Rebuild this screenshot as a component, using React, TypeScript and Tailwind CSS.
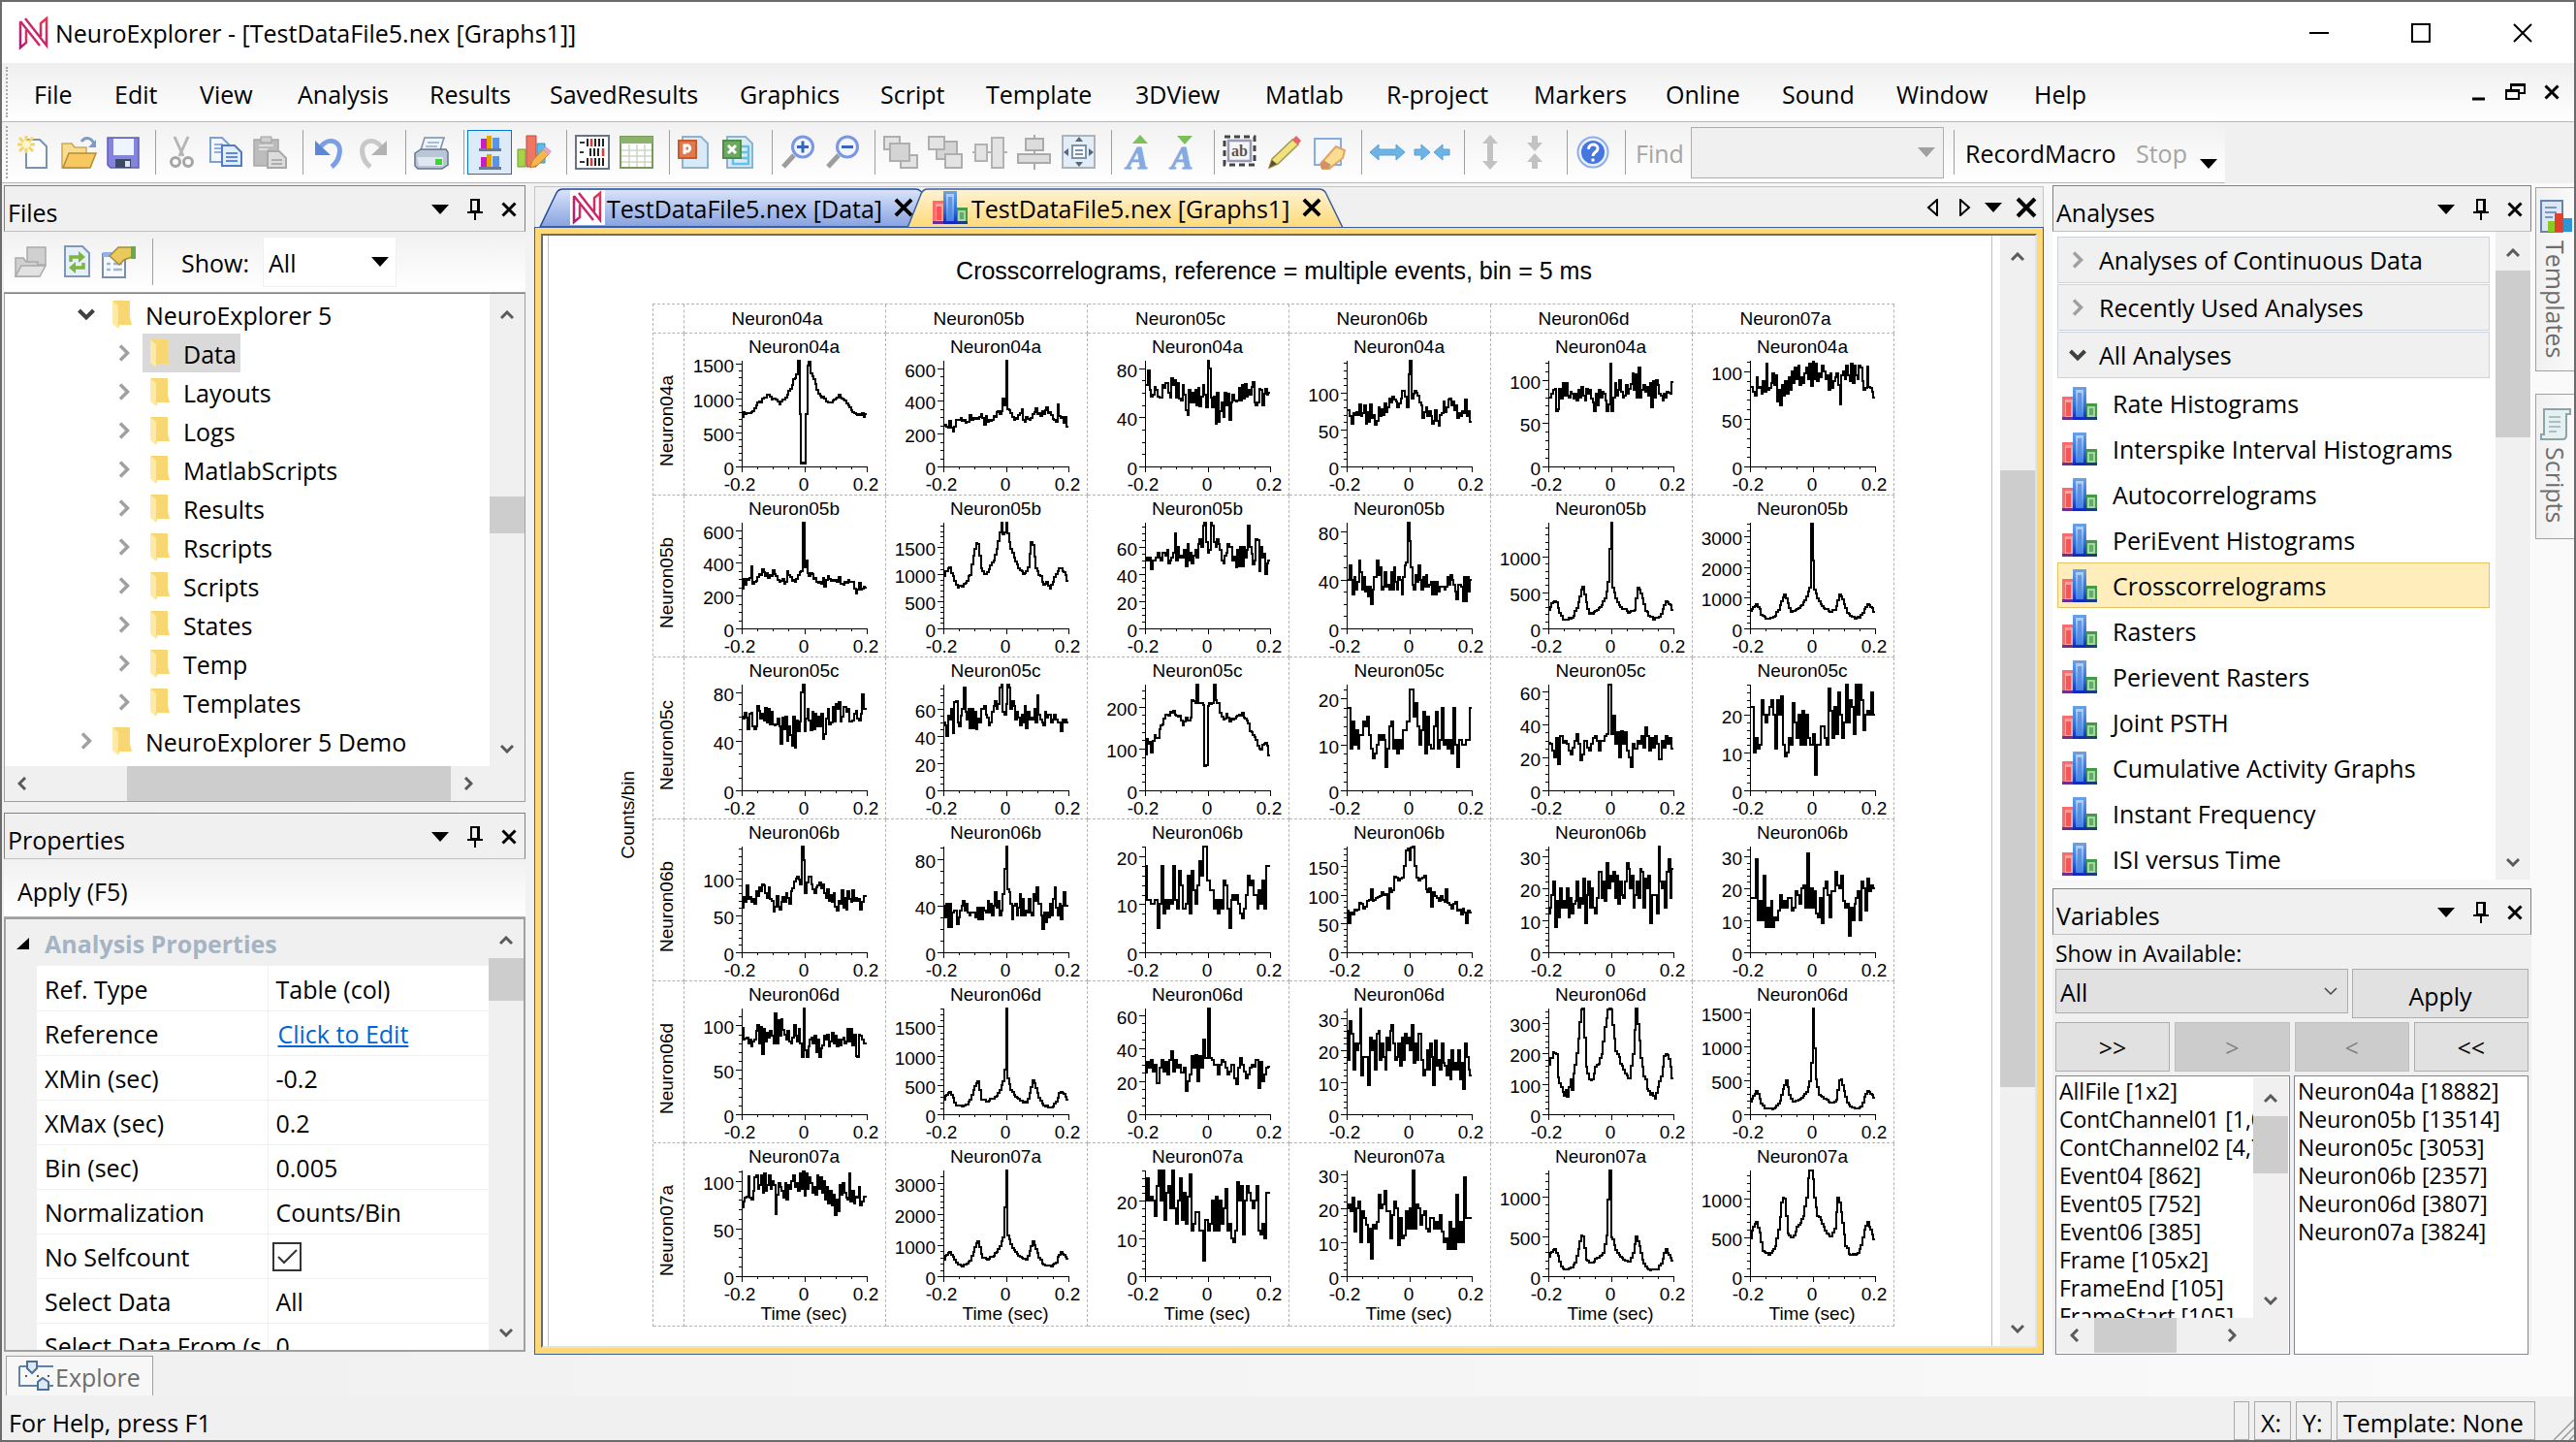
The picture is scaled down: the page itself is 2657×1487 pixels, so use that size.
import React from "react";

/* ---------------------------------------------------------------- data -- */

type Keys = [number, number][];

const NEURONS = ["Neuron04a", "Neuron05b", "Neuron05c", "Neuron06b", "Neuron06d", "Neuron07a"];

function smooth(keys: Keys, jitter = 0): number[] {
  const out: number[] = [];
  for (let i = 0; i < 80; i++) {
    let k = 0;
    while (k < keys.length - 2 && keys[k + 1][0] < i) k++;
    const [x0, y0] = keys[k];
    const [x1, y1] = keys[k + 1];
    const t = Math.min(1, Math.max(0, (i - x0) / (x1 - x0)));
    const wobble = Math.sin(i * 12.9898) * 43758.5453;
    out.push(y0 + (y1 - y0) * t + (wobble - Math.floor(wobble) - 0.5) * jitter);
  }
  return out;
}

const BASE: Record<string, number[]> = {
  "0,0": smooth([[0, 740], [1, 775], [6, 790], [9, 900], [12, 950], [14, 990], [17, 1050], [19, 990], [21, 990], [24, 930], [28, 1020], [31, 1130], [33, 1280], [35, 1340], [36, 1548], [37, 745], [38, 45], [40, 45], [41, 745], [42, 1480], [43, 1548], [44, 1350], [46, 1280], [48, 1130], [50, 1040], [53, 990], [55, 920], [58, 970], [62, 1040], [65, 990], [68, 900], [71, 800], [74, 770], [77, 770], [78, 740], [79, 780]], 40),
  "1,0": smooth([[0, 270], [2, 290], [5, 310], [6, 370], [7, 290], [10, 290], [12, 340], [17, 310], [20, 340], [23, 300], [28, 300], [29, 355], [30, 300], [36, 300], [38, 350], [39, 645], [40, 370], [41, 395], [42, 340], [44, 325], [48, 300], [52, 290], [53, 250], [54, 300], [60, 310], [66, 280], [68, 300], [71, 285], [73, 235], [75, 275], [77, 232], [78, 270], [79, 270]], 50),
  "2,0": [60, 58, 63, 59, 50, 62, 63, 52, 50, 52, 69, 65, 58, 62, 57, 67, 55, 66, 54, 64, 54, 53, 54, 58, 52, 38, 59, 50, 60, 40, 52, 45, 36, 60, 35, 57, 48, 56, 80, 86, 48, 58, 66, 57, 49, 64, 50, 62, 52, 60, 52, 62, 42, 46, 58, 66, 54, 55, 68, 56, 70, 66, 72, 56, 60, 68, 68, 64, 66, 56, 56, 57, 62, 65, 58, 57, 62, 78, 66, 66],
  "3,0": [60, 75, 68, 90, 72, 75, 68, 72, 65, 82, 76, 88, 82, 92, 90, 80, 74, 88, 72, 70, 55, 62, 76, 62, 58, 68, 75, 68, 80, 74, 65, 82, 86, 96, 100, 102, 98, 92, 143, 125, 80, 95, 102, 102, 92, 85, 80, 88, 90, 94, 86, 92, 80, 74, 85, 70, 78, 68, 80, 62, 56, 70, 66, 84, 60, 74, 58, 82, 72, 68, 84, 70, 74, 70, 72, 58, 68, 76, 76],
  "4,0": [97, 84, 85, 86, 80, 84, 76, 82, 84, 94, 100, 80, 98, 68, 96, 82, 92, 86, 94, 88, 80, 114, 80, 106, 88, 107, 95, 90, 84, 94, 82, 80, 86, 100, 88, 82, 96, 80, 64, 119, 72, 64, 76, 84, 86, 80, 88, 70, 84, 64, 74, 78, 88, 84, 90, 76, 82, 92, 80, 88, 76, 84, 78, 84, 86, 80, 82, 96, 82, 96, 78, 90, 66, 64, 90, 88, 84, 80, 80],
  "5,0": [72, 78, 82, 84, 105, 82, 80, 90, 104, 106, 92, 96, 106, 88, 108, 90, 96, 106, 92, 100, 96, 65, 86, 98, 94, 90, 82, 98, 80, 96, 92, 100, 106, 94, 98, 90, 108, 92, 110, 85, 108, 92, 104, 98, 88, 94, 86, 106, 92, 104, 88, 100, 80, 94, 76, 90, 74, 86, 64, 80, 68, 96, 86, 98, 88, 82, 80, 108, 78, 90, 76, 84, 82, 94, 74, 78, 84, 84],
  "1,1": smooth([[0, 1000], [2, 1080], [4, 1130], [5, 1020], [7, 900], [9, 750], [12, 790], [14, 820], [17, 1000], [19, 1350], [21, 1580], [22, 1560], [24, 1130], [26, 1000], [28, 1050], [30, 1150], [32, 1270], [34, 1480], [36, 1750], [37, 1958], [38, 1740], [39, 1760], [40, 1958], [41, 1740], [43, 1480], [45, 1300], [48, 1130], [52, 1000], [54, 1130], [56, 1600], [57, 1560], [59, 1130], [62, 950], [64, 820], [66, 860], [68, 750], [70, 870], [72, 1030], [74, 1130], [76, 1080], [78, 1000], [79, 900]], 50),
  "2,1": [50, 48, 40, 55, 52, 60, 42, 65, 66, 50, 47, 55, 60, 76, 58, 52, 60, 46, 60, 46, 58, 45, 53, 50, 60, 60, 62, 56, 54, 48, 50, 58, 62, 66, 60, 64, 76, 78, 58, 56, 64, 78, 76, 60, 66, 62, 52, 58, 54, 48, 56, 50, 62, 46, 58, 52, 54, 52, 60, 50, 70, 56, 52, 50, 48, 58, 54, 56, 56, 50, 52, 56, 52, 50, 50, 44, 52, 50, 52, 50],
  "3,1": [40, 30, 42, 22, 42, 22, 34, 36, 36, 24, 30, 36, 40, 44, 36, 42, 34, 32, 34, 34, 34, 30, 38, 28, 38, 28, 38, 36, 34, 44, 34, 42, 32, 40, 52, 38, 44, 32, 36, 50, 72, 91, 54, 52, 42, 28, 40, 42, 32, 38, 50, 32, 46, 32, 36, 34, 46, 34, 32, 50, 44, 56, 42, 42, 32, 20, 34, 26, 34, 30, 42, 32, 46, 56, 38, 32, 42, 28, 40, 52, 40, 40],
  "4,1": smooth([[0, 270], [2, 350], [4, 380], [6, 270], [8, 160], [10, 130], [13, 140], [15, 170], [17, 250], [19, 420], [21, 530], [22, 560], [23, 420], [24, 260], [28, 230], [32, 270], [34, 330], [36, 400], [38, 560], [39, 760], [40, 1806], [41, 600], [43, 420], [45, 320], [48, 270], [51, 210], [53, 200], [55, 350], [57, 590], [58, 540], [60, 370], [62, 230], [64, 160], [68, 120], [70, 130], [72, 220], [74, 370], [76, 380], [78, 310], [79, 270]], 30),
  "5,1": smooth([[0, 550], [2, 720], [4, 780], [6, 620], [9, 360], [11, 320], [14, 350], [17, 500], [19, 800], [21, 1050], [22, 1100], [24, 750], [25, 600], [28, 560], [31, 620], [34, 800], [36, 950], [38, 1250], [39, 2200], [40, 3395], [41, 1300], [42, 1200], [44, 900], [47, 720], [50, 600], [53, 540], [55, 800], [57, 1130], [59, 900], [61, 620], [63, 430], [66, 350], [69, 330], [72, 450], [73, 650], [75, 780], [77, 680], [79, 590]], 50),
  "2,2": smooth([[0, 90], [1, 118], [3, 115], [4, 92], [5, 120], [6, 130], [8, 128], [9, 145], [11, 155], [12, 175], [15, 180], [18, 190], [20, 175], [22, 178], [24, 160], [26, 175], [28, 170], [29, 175], [30, 212], [32, 212], [33, 253], [34, 212], [36, 205], [37, 200], [38, 58], [39, 58], [40, 200], [43, 212], [44, 253], [45, 212], [47, 208], [48, 190], [50, 172], [52, 180], [54, 165], [56, 170], [60, 185], [63, 180], [65, 172], [67, 145], [70, 130], [72, 110], [74, 100], [76, 115], [78, 110], [79, 88]], 10),
  "3,2": [18, 11, 11, 10, 10, 11, 11, 5, 10, 18, 8, 11, 9, 11, 10, 18, 11, 9, 17, 14, 9, 9, 10, 16, 8, 17, 13, 10, 14, 19, 16, 22, 22, 15, 15, 13, 13, 9, 11, 8, 11, 9, 15, 14, 9, 5, 11, 12, 11, 12, 10, 8, 7, 9, 12, 16, 14, 15, 12, 12, 9, 13, 10, 15, 9, 18, 18],
  "4,2": [25, 32, 28, 33, 26, 30, 19, 28, 33, 26, 32, 24, 33, 38, 26, 33, 28, 30, 25, 28, 14, 20, 24, 35, 28, 36, 20, 35, 28, 45, 34, 64, 34, 33, 30, 30, 24, 30, 33, 32, 28, 24, 26, 30, 22, 18, 28, 34, 30, 26, 22, 24, 28, 30, 29, 33, 16, 32, 20, 24, 28, 29],
  "5,2": [20, 26, 20, 21, 20, 16, 24, 28, 20, 28, 15, 22, 24, 18, 28, 18, 14, 20, 26, 15, 22, 14, 21, 27, 12, 14, 17, 17, 12, 12, 4, 15, 12, 14, 20, 12, 21, 12, 20, 14, 18, 23, 12, 14, 10, 9, 12, 25, 20, 24, 11, 20, 24, 22, 20, 18, 20, 24, 12, 11, 14, 10, 22, 22],
  "3,3": [72, 50, 70, 65, 74, 72, 74, 86, 84, 76, 80, 90, 92, 110, 90, 92, 95, 96, 98, 104, 100, 102, 76, 112, 104, 108, 132, 130, 125, 128, 130, 150, 178, 180, 160, 182, 184, 150, 130, 125, 128, 130, 134, 110, 104, 112, 80, 104, 98, 94, 90, 98, 92, 88, 110, 86, 82, 76, 84, 88, 72, 74, 66, 76, 70, 50, 72, 70],
  "4,3": [26, 17, 29, 25, 14, 22, 20, 22, 33, 12, 18, 18, 18, 9, 24, 20, 23, 14, 25, 26, 17, 22, 18, 14, 24, 20, 26, 28, 22, 17, 18, 22, 15, 24, 17, 25, 22, 24, 20, 28, 16, 22, 17, 25, 25, 17, 12, 14, 20, 14, 22, 18, 9, 23, 15, 17, 14, 22, 16, 15, 12, 17, 11, 20, 14, 16, 14, 20, 11, 16, 8, 22, 18, 14, 12],
  "5,3": [20, 21, 19, 23, 13, 20, 22, 10, 19, 17, 15, 10, 14, 5, 15, 14, 16, 24, 20, 21, 25, 19, 19, 11, 18, 22, 20, 9, 17, 11, 12, 19, 14, 20, 14, 31, 14, 21, 20, 15, 18, 19, 14, 13, 17, 17, 14, 16, 14, 18, 13, 10, 11, 8, 16, 8, 14, 8, 24, 10, 16, 10, 29, 17, 17, 17],
  "4,4": smooth([[0, 170], [2, 190], [3, 203], [5, 200], [6, 120], [8, 90], [10, 55], [11, 75], [12, 60], [14, 110], [15, 80], [16, 130], [18, 200], [20, 300], [21, 345], [22, 345], [24, 160], [26, 115], [28, 120], [30, 150], [32, 170], [34, 200], [36, 280], [38, 345], [39, 348], [40, 345], [41, 290], [43, 210], [46, 170], [49, 140], [52, 115], [54, 200], [56, 348], [57, 300], [59, 190], [61, 130], [63, 90], [65, 70], [67, 65], [68, 52], [70, 90], [72, 130], [74, 195], [76, 200], [78, 160], [79, 125]], 12),
  "5,4": smooth([[0, 260], [2, 310], [4, 340], [6, 250], [8, 120], [10, 80], [13, 90], [15, 110], [17, 170], [19, 350], [21, 510], [22, 500], [24, 220], [26, 170], [29, 190], [32, 240], [35, 290], [37, 500], [38, 970], [39, 1333], [40, 490], [41, 460], [43, 330], [45, 260], [48, 215], [52, 180], [54, 290], [56, 500], [58, 380], [60, 210], [62, 120], [65, 80], [68, 90], [70, 90], [72, 170], [74, 300], [75, 340], [77, 270], [79, 200]], 20),
  "5,5": smooth([[0, 500], [2, 650], [4, 700], [6, 560], [8, 330], [10, 290], [13, 290], [16, 380], [18, 600], [20, 950], [21, 1010], [22, 1000], [24, 560], [26, 500], [28, 540], [30, 620], [32, 700], [34, 790], [36, 1000], [37, 1250], [38, 1365], [39, 1360], [40, 1250], [41, 1000], [43, 790], [46, 680], [49, 560], [52, 500], [54, 620], [56, 1010], [57, 960], [59, 700], [61, 400], [63, 300], [66, 280], [69, 300], [71, 400], [73, 620], [75, 700], [77, 600], [79, 490]], 30),
};

/* Spikes that differ from the time-reversed histogram: bin -> value. */
const SPIKES: Record<string, Keys> = {
  "1,4": [[39, 1100], [40, 1466], [38, 640]],
  "4,5": [[38, 480], [39, 760], [40, 1561]],
};

/* Per cell: axis maximum, major step, minor step. */
const SCALE: [number, number, number][][] = [
  [[1548, 500, 100], [645, 200, 50], [86, 40, 10], [143, 50, 10], [122, 50, 10], [111, 50, 10]],
  [[645, 200, 50], [1958, 500, 100], [78, 20, 5], [87, 40, 10], [1466, 500, 100], [3437, 1000, 200]],
  [[86, 40, 10], [78, 20, 5], [253, 100, 20], [23, 10, 2], [64, 20, 5], [28, 10, 2]],
  [[143, 50, 10], [91, 40, 10], [22, 10, 2], [184, 50, 10], [33, 10, 2], [33, 10, 2]],
  [[119, 50, 10], [1806, 500, 100], [64, 20, 5], [33, 10, 2], [348, 100, 20], [1561, 500, 100]],
  [[111, 50, 10], [3395, 1000, 200], [28, 10, 2], [31, 10, 2], [1333, 500, 100], [1365, 500, 100]],
];

function valuesFor(row: number, col: number): number[] {
  const own = BASE[`${row},${col}`];
  const values = own ? own.slice() : BASE[`${col},${row}`].slice().reverse();
  for (const [bin, v] of SPIKES[`${row},${col}`] ?? []) values[bin] = v;
  return values;
}

/* -------------------------------------------------------------- charts -- */

const PX = 59;
const PW = 129;
const PY = 137;
const PH = 109;

function Correlogram({ row, col }: { row: number; col: number }) {
  const [max, major, minor] = SCALE[row][col];
  const values = valuesFor(row, col);
  const step = PW / values.length;
  const y = (v: number) => Math.round(PY - (Math.min(v, max) / max) * PH);
  const d = values
    .map((v, i) => `${i === 0 ? `M${PX} ` : "V"}${y(v)}H${Math.round(PX + (i + 1) * step)}`)
    .join("");
  const ticks: number[] = [];
  for (let v = 0; v <= max; v += minor) ticks.push(v);
  const last = row === 5;
  const h = last ? 188 : 166;
  return (
    <svg width="207" height={h} viewBox={`0 0 207 ${h}`} className="block" fontFamily="'Liberation Sans', Arial, sans-serif" fontSize="19" fill="#000">
      <text x="113" y="20" textAnchor="middle">{NEURONS[row]}</text>
      <g stroke="#000" strokeWidth="1" shapeRendering="crispEdges">
        <path d={`M${PX}.5 ${PY - PH}V${PY + 1}M${PX} ${PY}.5H${PX + PW + 1}`} />
        {ticks.map((v) => (
          <path key={v} d={`M${PX} ${y(v)}.5h${v % major === 0 ? -6 : -3}`} />
        ))}
        {[0, 1, 2, 3, 4, 5, 6, 7, 8].map((i) => (
          <path key={i} d={`M${Math.round(PX + (i * PW) / 8)}.5 ${PY}v${i % 4 === 0 ? 6 : 3}`} />
        ))}
      </g>
      <path d={d} fill="none" stroke="#000" strokeWidth="2" shapeRendering="crispEdges" />
      {ticks.filter((v) => v % major === 0).map((v) => (
        <text key={v} x="51" y={y(v) + 9} textAnchor="end">{v}</text>
      ))}
      <text x="57" y="162" textAnchor="middle">-0.2</text>
      <text x="123" y="162" textAnchor="middle">0</text>
      <text x="187" y="162" textAnchor="middle">0.2</text>
      {last && <text x="123" y="182" textAnchor="middle">Time (sec)</text>}
    </svg>
  );
}

const DASH = "border-r border-b border-dashed border-[#b4b4b4]";

function GraphPage() {
  return (
    <div className="flex min-w-0 flex-1 flex-col items-center overflow-hidden border-x border-[#c0c0c0] bg-white pt-[22px] font-['Liberation_Sans',Arial,sans-serif] text-[19px] leading-none text-black">
      <h1 className="pl-2 text-[25px] leading-[28px]">Crosscorrelograms, reference = multiple events, bin = 5 ms</h1>
      <div className="flex items-center gap-4 pt-5 pr-7">
        <div className="rotate-180 [writing-mode:vertical-rl]">Counts/bin</div>
        <div className="grid grid-cols-[32px_repeat(6,208px)] border-t border-l border-dashed border-[#b4b4b4]">
          <div className={DASH} />
          {NEURONS.map((n) => (
            <div key={n} className={`flex h-[30px] items-center justify-center pr-4 ${DASH}`}>{n}</div>
          ))}
          {NEURONS.map((n, r) => (
            <React.Fragment key={n}>
              <div className={`flex justify-center pt-[42px] pr-1 ${DASH}`}>
                <span className="h-[95px] rotate-180 [writing-mode:vertical-rl]">{n}</span>
              </div>
              {NEURONS.map((m, c) => (
                <div key={m} className={DASH}>
                  <Correlogram row={r} col={c} />
                </div>
              ))}
            </React.Fragment>
          ))}
        </div>
      </div>
    </div>
  );
}

/* --------------------------------------------------------------- icons -- */

function Ic({ children, size = 36 }: { children: React.ReactNode; size?: number }) {
  return (
    <svg width={size} height={size} viewBox="0 0 36 36" className="block shrink-0 overflow-visible" aria-hidden="true">
      {children}
    </svg>
  );
}

const Logo = () => (
  <Ic>
    <defs>
      <linearGradient id="lg" x1="0" y1="1" x2="1" y2="0"><stop offset="0" stopColor="#a81c7a" /><stop offset="1" stopColor="#ea3355" /></linearGradient>
    </defs>
    <g fill="none" stroke="url(#lg)" strokeWidth="2.5" strokeLinejoin="miter">
      <path d="M4 6V33L10 28V15" />
      <path d="M4 6L24 31" />
      <path d="M9 3L31 31V3L25 8V22" />
    </g>
  </Ic>
);

const Bars = () => (
  <svg width="36" height="34" viewBox="0 0 36 34" className="block shrink-0" aria-hidden="true">
    <defs>
      <linearGradient id="bb" x1="0" y1="0" x2="0" y2="1"><stop offset="0" stopColor="#6aa3ea" /><stop offset=".6" stopColor="#2a6fd8" /><stop offset="1" stopColor="#1022c0" /></linearGradient>
      <linearGradient id="bi" x1="0" y1="0" x2="0" y2="1"><stop offset="0" stopColor="#b4d0f5" /><stop offset="1" stopColor="#3f7fe0" /></linearGradient>
    </defs>
    <path d="M0 10H12V34H0Z" fill="#ff6a6a" />
    <path d="M3 13H11V31H3Z" fill="#ffa0a0" />
    <path d="M4 16H9V30H4Z" fill="#ff5252" />
    <path d="M0 31H12V34H0Z" fill="#70308a" />
    <path d="M24 17H36V34H24Z" fill="#459a45" />
    <path d="M26 20H34V31H26Z" fill="#a5d6a5" />
    <path d="M28 22H32V29H28Z" fill="#62ad66" />
    <path d="M24 31H36V34H24Z" fill="#1a3f78" />
    <path d="M11 0H25V34H11Z" fill="url(#bb)" />
    <path d="M14 3H22V31H14Z" fill="url(#bi)" />
    <path d="M16 6H20V28H16Z" fill="#4b86de" opacity=".7" />
  </svg>
);

const Folder = () => (
  <svg width="21" height="30" viewBox="0 0 21 30" className="block shrink-0" aria-hidden="true">
    <path d="M1 1H19V18L21 26H8V29L1 24Z" fill="#f8d672" />
    <path d="M1 1L7 6V30L1 25Z" fill="#ffe9a6" />
  </svg>
);

const page = (x: number, y: number, w: number, h: number, fill = "#eef4fc", stroke = "#7b93ad") => (
  <path d={`M${x} ${y}h${w - 7}l7 7v${h - 7}h-${w}z`} fill={fill} stroke={stroke} strokeWidth="2" />
);

const BIG_A = (
  <text x="18" y="35" textAnchor="middle" fontSize="34" fontWeight="bold" fontStyle="italic" fontFamily="'Liberation Serif', serif" fill="#86a9e2" stroke="#86a9e2" strokeWidth="1">A</text>
);

const ICONS: Record<string, React.ReactNode> = {
  New: (<>{page(10, 5, 21, 29, "#fbfdff")}<path d="M10 1v18M1 10h18M3 3l14 14M17 3L3 17" stroke="#f2d56b" strokeWidth="3" /><circle cx="10" cy="10" r="4" fill="#fff6c8" /></>),
  Open: (<><path d="M1 9h10l3 4h12v21H1z" fill="#f6dd92" stroke="#cfa94e" strokeWidth="1.5" /><path d="M8 19h28l-6 15H2z" fill="#f7c860" stroke="#b68a35" strokeWidth="1.5" /><path d="M21 7c4-6 11-4 13 3" fill="none" stroke="#7f9cbf" strokeWidth="3" /><path d="M36 5v8h-8z" fill="#7f9cbf" /></>),
  Save: (<><path d="M2 3h32v31H5l-3-3z" fill="#8484dc" stroke="#5e5eb8" strokeWidth="1.5" /><path d="M8 4h21v17H8z" fill="#eef5ff" /><path d="M10 25h16v9H10z" fill="#3d4a66" /><path d="M20 27h5v6h-5z" fill="#dfe5f2" /></>),
  Cut: (<><path d="M11 2l9 20M25 2l-9 20" stroke="#b5b5b5" strokeWidth="3" /><circle cx="12" cy="28" r="4.5" fill="none" stroke="#a5a5a5" strokeWidth="3" /><circle cx="25" cy="28" r="4.5" fill="none" stroke="#a5a5a5" strokeWidth="3" /></>),
  Copy: (<>{page(2, 3, 19, 25, "#f3f8ff", "#7d9fd3")}<path d="M6 10h9M6 14h11M6 18h11" stroke="#8fb0de" strokeWidth="2" />{page(14, 11, 20, 21, "#e2eeff", "#4f7cc9")}<path d="M18 19h12M18 23h12M18 27h12" stroke="#5b8ad6" strokeWidth="2" /></>),
  Paste: (<><path d="M1 5h25v27H1z" fill="#bcbcbc" stroke="#a8a8a8" strokeWidth="1.5" /><path d="M8 2h11v6H8z" fill="#cfcfcf" stroke="#9d9d9d" /><path d="M6 11h15M6 15h9" stroke="#dedede" strokeWidth="2" />{page(15, 17, 19, 17, "#dcdcdc", "#a8a8a8")}<path d="M19 26h11M19 30h11" stroke="#adadad" strokeWidth="2" /></>),
  Undo: (<><path d="M10 12C18 2 32 6 29 20c-1 6-4 10-8 13" fill="none" stroke="#7b9fe2" strokeWidth="5" /><path d="M4 6v15h16z" fill="#5b87d6" /></>),
  Redo: (<><path d="M26 12C18 2 4 6 7 20c1 6 4 10 8 13" fill="none" stroke="#c8c8c8" strokeWidth="5" /><path d="M32 6v15H16z" fill="#b2b2b2" /></>),
  Print: (<><path d="M11 3h20l-5 16H6z" fill="#eef5ff" stroke="#7c8ea6" strokeWidth="1.5" /><path d="M14 8h12M12 12h12" stroke="#a9bdd6" strokeWidth="2" /><path d="M1 19l6-4h26l2 3v13l-6 4H4l-3-3z" fill="#b9c6d6" stroke="#66768c" strokeWidth="1.5" /><path d="M3 23h27v9H5z" fill="#dfe7f0" /><path d="M22 25h7v6h-7z" fill="#39d62f" /></>),
  Graphs: (<><path d="M9 4h6v10H9z" fill="#c81ec8" /><path d="M15 1h5v13h-5z" fill="#e3a500" /><path d="M21 3h7v11h-7z" fill="#5b93ea" /><path d="M7 14h23v3H7z" fill="#6a7a92" /><path d="M9 23h6v10H9z" fill="#c81ec8" /><path d="M15 20h5v13h-5z" fill="#e3a500" /><path d="M21 22h7v11h-7z" fill="#5b93ea" /><path d="M7 33h23v3H7z" fill="#6a7a92" /></>),
  "Edit graph": (<><path d="M1 15h8v18H1z" fill="#a5d44a" stroke="#6e9e22" /><path d="M10 1h10v32H10z" fill="#ee7763" stroke="#c9463a" /><path d="M21 9h8v20h-8z" fill="#5dbbe8" stroke="#3194c9" /><path d="M14 34l2-7 11-12 6 5-11 11z" fill="#f6b64b" stroke="#c0852a" /><path d="M27 15l3-3 6 5-3 4z" fill="#dba6cc" /></>),
  Raster: (<><path d="M1 1h34v34H1z" fill="#fff" stroke="#66748a" strokeWidth="2" /><path d="M5 8h5M5 18h4M5 28h5" stroke="#333" strokeWidth="2" /><path d="M13 4v8M21 4v8M25 4v8M29 4v8M16 14v8M20 14v8M24 14v8M13 24v8M21 24v8M25 24v8M29 24v8" stroke="#222" strokeWidth="2" /><path d="M17 4v8M29 14v8M17 24v8" stroke="#e33" strokeWidth="2.5" /></>),
  Table: (<><path d="M1 2h33v32H1z" fill="#fff" stroke="#7a9a5a" strokeWidth="2" /><path d="M1 2h33v7H1z" fill="#8bb36a" /><path d="M10 10v23M18 10v23M26 10v23M2 16h31M2 22h31M2 28h31" stroke="#cdd5c8" strokeWidth="1.5" /></>),
  PowerPoint: (<>{page(5, 2, 26, 32, "#d8eaf7", "#8fb3cf")}<path d="M1 6h18v18H1z" fill="#e2794a" stroke="#c95a2b" strokeWidth="2" /><path d="M7 20V11h4a3.500 3.500 0 0 1 0 6H8" fill="none" stroke="#fff" strokeWidth="3" /></>),
  Excel: (<>{page(5, 2, 26, 32, "#d8eaf7", "#8fb3cf")}<path d="M20 12h7v18H11v-5M20 18h7M20 24h7" fill="none" stroke="#61c1e8" strokeWidth="2.5" /><path d="M1 6h18v18H1z" fill="#6ba860" stroke="#4f8c46" strokeWidth="2" /><path d="M6 11l8 8M14 11l-8 8" stroke="#fff" strokeWidth="3" /></>),
  "Zoom in": (<><circle cx="23" cy="12.500" r="10.500" fill="#f2f7ff" stroke="#7b97e0" strokeWidth="3" /><path d="M17 12.500h12M23 6.500v12" stroke="#3b64b8" strokeWidth="3" /><path d="M14 21L3 33" stroke="#9d9d9d" strokeWidth="5" /></>),
  "Zoom out": (<><circle cx="23" cy="12.500" r="10.500" fill="#f2f7ff" stroke="#7b97e0" strokeWidth="3" /><path d="M17 12.500h12" stroke="#3b64b8" strokeWidth="3" /><path d="M14 21L3 33" stroke="#9d9d9d" strokeWidth="5" /></>),
  "To front": (<g fill="#e3e3e3" stroke="#aeaeae" strokeWidth="2"><path d="M1 2h16v13H1zM18 21h17v13H18z" /><path d="M7 9h20v18H7z" fill="#d4d4d4" /></g>),
  "To back": (<g fill="#e3e3e3" stroke="#aeaeae" strokeWidth="2"><path d="M9 7h21v18H9z" fill="#d4d4d4" /><path d="M1 2h16v13H1zM18 20h17v14H18z" /></g>),
  "Align middle": (<g fill="#e3e3e3" stroke="#b2b2b2" strokeWidth="2"><path d="M0 18h36" /><path d="M3 10h12v17H3zM20 3h12v31H20z" /></g>),
  "Align center": (<g fill="#dcdcdc" stroke="#aaaaaa" strokeWidth="2"><path d="M18 0v36" /><path d="M9 4h18v12H9zM1 20h33v9H1z" /></g>),
  "Fit page": (<><path d="M1 1h33v33H1z" fill="#e2edf8" stroke="#a9b4bf" strokeWidth="2" /><path d="M11 11h14v13H11z" fill="#fff" stroke="#7c93ad" strokeWidth="2" /><path d="M18 2l4 5h-8zM18 33l4-5h-8zM2 18l5-4v8zM33 18l-5-4v8z" fill="#54677e" /><path d="M14 16h8M14 20h8" stroke="#7c93ad" strokeWidth="2" /></>),
  "Font up": (<>{BIG_A}<path d="M21 0l8 9H13z" fill="#7cc05c" /></>),
  "Font down": (<>{BIG_A}<path d="M13 1h16l-8 9z" fill="#7cc05c" /></>),
  "Text box": (<><path d="M2 2h31v29H2z" fill="none" stroke="#444" strokeWidth="3" strokeDasharray="6 4" /><path d="M6 6h23v21H6z" fill="#f5f5f8" stroke="#9a9ab4" strokeWidth="2.5" /><text x="17.500" y="22" textAnchor="middle" fontSize="16" fontWeight="bold" fontFamily="'Liberation Serif', serif" fill="#555">ab</text></>),
  Pencil: (<><path d="M2 34l3-9L26 5l6 5L11 30z" fill="#f0e27c" stroke="#a99a45" strokeWidth="1.500" /><path d="M26 5l4-4 5 5-3 4z" fill="#e5656b" /><path d="M2 34l3-8 5 4z" fill="#5b5137" /></>),
  Note: (<><path d="M3 4h27v27H3z" fill="#f5f9ff" stroke="#86ade0" strokeWidth="2" /><path d="M9 30L25 12l9 4-2 8-14 11h-7z" fill="#fbdc92" stroke="#e0a566" strokeWidth="2" /><path d="M9 30l3-4 8 5-3 4h-7z" fill="#cf9466" /></>),
  Widen: (<path d="M0 18l9-8v5h18v-5l9 8-9 8v-5H9v5z" fill="#6cb4e6" stroke="#5b9ed2" strokeWidth="1" />),
  Narrow: (<path d="M0 15h7v-5l9 8-9 8v-5H0zM36 15h-7v-5l-9 8 9 8v-5h7z" fill="#6cb4e6" stroke="#5b9ed2" strokeWidth="1" />),
  Heighten: (<path d="M18 0l8 9h-5v18h5l-8 9-8-9h5V9h-5z" fill="#c2c2c2" />),
  Shorten: (<path d="M15 1h6v7h5l-8 9-8-9h5zM15 35h6v-7h5l-8-9-8 9h5z" fill="#c2c2c2" />),
  Help: (<><circle cx="18" cy="18" r="15.500" fill="#eaf1ff" stroke="#8facec" strokeWidth="2" /><circle cx="18" cy="18" r="12" fill="#4676e0" /><path d="M13.500 15c0-7 9.500-6 9.500-1 0 4-5 3.500-5 8M18 24.500v3" fill="none" stroke="#fff" strokeWidth="3" /></>),
};

const TOOL_GROUPS: string[][] = [
  ["New", "Open", "Save"],
  ["Cut", "Copy", "Paste"],
  ["Undo", "Redo"],
  ["Print"],
  ["Graphs", "Edit graph"],
  ["Raster", "Table"],
  ["PowerPoint", "Excel"],
  ["Zoom in", "Zoom out"],
  ["To front", "To back", "Align middle", "Align center", "Fit page"],
  ["Font up", "Font down"],
  ["Text box", "Pencil", "Note"],
  ["Widen", "Narrow"],
  ["Heighten", "Shorten"],
  ["Help"],
];

const Sep = () => <div className="mr-[3px] ml-[10px] h-[46px] w-px bg-[#9f9f9f]" />;

const Grip = () => <div className="my-1 ml-1 w-0 self-stretch border-l-2 border-dotted border-[#a8a8a8]" />;

const Triangle = ({ fill = "#000" }: { fill?: string }) => (
  <svg width="18" height="10" viewBox="0 0 18 10" className="block shrink-0" aria-hidden="true"><path d="M0 0H18L9 10Z" fill={fill} /></svg>
);

const Cross = ({ size = 16, width = 3 }: { size?: number; width?: number }) => (
  <svg width={size} height={size} viewBox="0 0 16 16" className="block shrink-0" aria-hidden="true">
    <path d="M1.500 1.500L14.500 14.500M14.500 1.500L1.500 14.500" stroke="#000" strokeWidth={width} />
  </svg>
);

const Pin = () => (
  <svg width="16" height="24" viewBox="0 0 16 24" className="block shrink-0" aria-hidden="true">
    <path d="M4 2H12V14H4ZM0 15H16M8 15V23" fill="none" stroke="#000" strokeWidth="2" /><path d="M10 2h3v12h-3z" />
  </svg>
);

const ROT = { up: "", down: "rotate-180", left: "-rotate-90", right: "rotate-90" };

function Arrow({ dir }: { dir: keyof typeof ROT }) {
  return (
    <button type="button" aria-label={`Scroll ${dir}`} className="flex size-9 shrink-0 items-center justify-center">
      <svg width="14" height="10" viewBox="0 0 14 10" className={ROT[dir]} aria-hidden="true">
        <path d="M1 8L7 2L13 8" fill="none" stroke="#5a5a5a" strokeWidth="3" />
      </svg>
    </button>
  );
}

const VBar = ({ thumb }: { thumb: string }) => (
  <div className="flex w-9 shrink-0 flex-col bg-[#f0f0f0] pt-1">
    <Arrow dir="up" />
    <div className="min-h-0 flex-1"><div className={`bg-[#cdcdcd] ${thumb}`} /></div>
    <Arrow dir="down" />
  </div>
);

const Chevron = ({ open }: { open?: boolean }) => (
  <svg width="18" height="18" viewBox="0 0 18 18" className="block shrink-0" aria-hidden="true">
    {open ? <path d="M1.500 5L9 12.500L16.500 5" fill="none" stroke="#404040" strokeWidth="4" /> : <path d="M5 1.500L12.500 9L5 16.500" fill="none" stroke="#a0a0a0" strokeWidth="3.500" />}
  </svg>
);

/* -------------------------------------------------------------- panels -- */

function PanelHeader({ title }: { title: string }) {
  return (
    <div className="flex h-12 shrink-0 items-center border border-[#808080] border-b-[#c0c0c0] bg-[#f0f0f0] pr-2 pl-[3px]">
      <h2 className="flex-1 pt-[7px]">{title}</h2>
      <div className="flex items-center gap-[19px] pt-[2px]">
        <button type="button" aria-label={`${title} menu`}><Triangle /></button>
        <button type="button" aria-label={`Pin ${title}`}><Pin /></button>
        <button type="button" aria-label={`Close ${title}`}><Cross /></button>
      </div>
    </div>
  );
}

const TREE = ["Data", "Layouts", "Logs", "MatlabScripts", "Results", "Rscripts", "Scripts", "States", "Temp", "Templates"];

function TreeRow({ label, root, open, selected }: { label: string; root?: boolean; open?: boolean; selected?: boolean }) {
  return (
    <li className={`flex h-10 items-center ${root ? "pl-[71px]" : "pl-[110px]"}`}>
      <button type="button" aria-label={`Toggle ${label}`} className="w-[32px] pl-1"><Chevron open={open} /></button>
      <button type="button" className={`flex h-10 items-center gap-[14px] pr-1 pl-[7px] ${selected ? "bg-[#d9d9d9]" : ""}`}>
        <Folder />
        <span className="pt-px">{label}</span>
      </button>
    </li>
  );
}

function FilesPanel() {
  return (
    <section className="flex h-[636px] shrink-0 flex-col">
      <PanelHeader title="Files" />
      <div className="flex h-[63px] shrink-0 items-center border-b border-[#a8a8a8] bg-linear-to-b from-[#f1f1f1] to-white pl-2">
        <button type="button" aria-label="Up one level" className="w-[46px] pl-[3px]">
          <Ic><g fill="#d0d0d0" stroke="#a9a9a9" strokeWidth="1.500"><path d="M13 3h19v18H13z" /><path d="M1 14h8l3 4h12v15H1z" /><path d="M7 22h25l-6 11H1z" fill="#e2e2e2" /></g></Ic>
        </button>
        <button type="button" aria-label="Refresh" className="w-[46px] pl-1">
          <Ic>{page(5, 2, 25, 31, "#e6f0fb", "#7f98b5")}<path d="M11 18v-5h9M24 19v5h-9" fill="none" stroke="#7db63c" strokeWidth="3.500" /><path d="M19 7l7 6-7 6zM16 18l-7 6 7 6z" fill="#7db63c" /></Ic>
        </button>
        <button type="button" aria-label="Properties" className="w-[46px]">
          <Ic><path d="M2 10h23v24H2z" fill="#f6f9ff" stroke="#7c8fa8" strokeWidth="2" /><path d="M2 8h23v5H2z" fill="#8fb2ea" /><path d="M6 20h4M13 20h9M6 26h4M13 26h9" stroke="#9db4d8" strokeWidth="2.500" /><path d="M9 12L18 3h14v10l-8 3-5 5z" fill="#e8c95c" stroke="#a58a3a" strokeWidth="1.500" /><path d="M31 2h5v13h-5z" fill="#6aa84f" /></Ic>
        </button>
        <div className="mr-[11px] ml-[7px] h-12 w-px bg-[#9f9f9f]" />
        <label htmlFor="show" className="ml-[18px] pt-[2px]">Show:</label>
        <div className="relative ml-[14px] flex h-[52px] w-[138px] items-center">
          <select id="show" defaultValue="All" className="h-full w-full appearance-none border border-[#f0f0f0] bg-white px-[5px] pt-[2px]">
            <option>All</option>
          </select>
          <span className="pointer-events-none absolute right-2"><Triangle /></span>
        </div>
      </div>
      <div className="flex min-h-0 flex-1 flex-col border border-[#a0a0a0] border-t-[#808080] bg-white">
        <div className="flex min-h-0 flex-1">
          <ul className="min-w-0 flex-1 overflow-hidden pt-px">
            <TreeRow label="NeuroExplorer 5" root open />
            {TREE.map((t) => <TreeRow key={t} label={t} selected={t === "Data"} />)}
            <TreeRow label="NeuroExplorer 5 Demo" root />
          </ul>
          <VBar thumb="mt-[169px] h-[38px]" />
        </div>
        <div className="flex h-9 shrink-0 bg-[#f0f0f0] pr-10">
          <Arrow dir="left" />
          <div className="flex-1 pl-[90px]"><div className="h-9 w-[334px] bg-[#cdcdcd]" /></div>
          <Arrow dir="right" />
        </div>
      </div>
    </section>
  );
}

const PROPS: [string, React.ReactNode][] = [
  ["Ref. Type", "Table (col)"],
  ["Reference", <a href="#reference" className="pl-[2px] text-[#0066d6] underline">Click to Edit</a>],
  ["XMin (sec)", "-0.2"],
  ["XMax (sec)", "0.2"],
  ["Bin (sec)", "0.005"],
  ["Normalization", "Counts/Bin"],
  ["No Selfcount", "check"],
  ["Select Data", "All"],
  ["Select Data From (s", "0"],
];

function PropertiesPanel() {
  return (
    <section className="mt-[11px] flex min-h-0 flex-1 flex-col">
      <PanelHeader title="Properties" />
      <div className="flex h-[60px] shrink-0 items-center border-b border-[#b0b0b0] bg-linear-to-b from-[#f1f1f1] to-white pl-[14px]">
        <button type="button" className="pt-[6px]">Apply (F5)</button>
      </div>
      <div className="flex min-h-0 flex-1 border-2 border-[#a0a0a0] bg-white">
        <div className="min-w-0 flex-1 overflow-hidden">
          <button type="button" className="flex h-12 w-full items-center gap-4 bg-[#f0f0f0] pt-px pl-[11px] font-bold text-[#a5b4c5]">
            <svg width="13" height="12" viewBox="0 0 13 12" aria-hidden="true"><path d="M13 0V12H0Z" fill="#000" /></svg>
            Analysis Properties
          </button>
          <table className="w-full table-fixed border-collapse">
            <tbody>
              {PROPS.map(([name, value]) => (
                <tr key={name} className="h-[46px]">
                  <td className="w-8 bg-[#f0f0f0]" />
                  <th scope="row" className="w-[238px] overflow-hidden border-r border-b border-[#f0f0f0] pt-[2px] pl-2 text-left font-normal whitespace-nowrap">
                    {value === "check" ? <label htmlFor="selfcount">{name}</label> : name}
                  </th>
                  <td className="border-b border-[#f0f0f0] pt-[2px] pl-2">
                    {value === "check" ? (
                      <span className="relative -ml-1 block size-[30px]">
                        <input id="selfcount" type="checkbox" defaultChecked className="block size-full appearance-none border-2 border-[#333] bg-white" />
                        <svg viewBox="0 0 30 30" className="pointer-events-none absolute inset-0" aria-hidden="true"><path d="M6 15L12 21L25 8" fill="none" stroke="#333" strokeWidth="2" /></svg>
                      </span>
                    ) : value}
                  </td>
                </tr>
              ))}
            </tbody>
          </table>
        </div>
        <VBar thumb="h-[44px]" />
      </div>
    </section>
  );
}

const ANALYSES = ["Rate Histograms", "Interspike Interval Histograms", "Autocorrelograms", "PeriEvent Histograms", "Crosscorrelograms", "Rasters", "Perievent Rasters", "Joint PSTH", "Cumulative Activity Graphs", "Instant Frequency", "ISI versus Time"];
const CATEGORIES = ["Analyses of Continuous Data", "Recently Used Analyses", "All Analyses"];

function AnalysesPanel() {
  return (
    <section className="flex h-[716px] shrink-0 flex-col">
      <PanelHeader title="Analyses" />
      <div className="flex min-h-0 flex-1 bg-white pl-[5px]">
        <div className="min-w-0 flex-1 overflow-hidden pt-[5px] pr-[6px]">
          <div className="flex flex-col gap-px">
            {CATEGORIES.map((c, i) => (
              <button key={c} type="button" className="flex h-12 items-center gap-[13px] border border-[#ccd2de] bg-[#f0f0f0] pl-[11px]">
                <Chevron open={i === 2} />
                <span>{c}</span>
              </button>
            ))}
          </div>
          <div className="flex flex-col pt-[2px]">
            {ANALYSES.map((a) => (
              <button key={a} type="button" className={`flex h-[47px] shrink-0 items-center gap-4 border pl-1 ${a === "Crosscorrelograms" ? "border-[#e5c365] bg-[#ffeebb]" : "border-transparent"}`}>
                <Bars />
                <span className="pt-px">{a}</span>
              </button>
            ))}
          </div>
        </div>
        <VBar thumb="h-[172px]" />
        <div className="w-px" />
      </div>
    </section>
  );
}

const AVAILABLE = ["AllFile [1x2]", "ContChannel01 [1,0", "ContChannel02 [4,7", "Event04 [862]", "Event05 [752]", "Event06 [385]", "Frame [105x2]", "FrameEnd [105]", "FrameStart [105]"];
const CHOSEN = ["Neuron04a [18882]", "Neuron05b [13514]", "Neuron05c [3053]", "Neuron06b [2357]", "Neuron06d [3807]", "Neuron07a [3824]"];

const BTN = "border border-[#adadad] bg-[#e1e1e1]";
const BTN_OFF = "border border-[#bfbfbf] bg-[#cccccc] text-[#838383]";

function VariablesPanel() {
  return (
    <section className="mt-[9px] flex min-h-0 flex-1 flex-col bg-[#f0f0f0]">
      <PanelHeader title="Variables" />
      <div className="flex min-h-0 flex-1 flex-col px-[3px]">
        <label htmlFor="available" className="h-[35px] pt-1 text-[23px] leading-[30px]">Show in Available:</label>
        <div className="flex gap-1">
          <div className="relative flex h-[46px] flex-1 items-center">
            <select id="available" defaultValue="All" className={`h-full w-full appearance-none px-1 pt-[2px] ${BTN}`}>
              <option>All</option>
            </select>
            <svg width="14" height="9" viewBox="0 0 14 9" className="pointer-events-none absolute right-[11px]" aria-hidden="true"><path d="M1 1L7 7L13 1" fill="none" stroke="#444" strokeWidth="1.500" /></svg>
          </div>
          <button type="button" className={`h-[51px] w-[182px] pt-1 ${BTN}`}>Apply</button>
        </div>
        <div className="mt-1 grid h-[51px] grid-cols-4 gap-[5px]">
          <button type="button" className={`pt-px ${BTN}`}>&gt;&gt;</button>
          <button type="button" disabled className={`pt-px ${BTN_OFF}`}>&gt;</button>
          <button type="button" disabled className={`pt-px ${BTN_OFF}`}>&lt;</button>
          <button type="button" className={`pt-px ${BTN}`}>&lt;&lt;</button>
        </div>
        <div className="mt-1 grid min-h-0 flex-1 grid-cols-2 gap-1 text-[23px] leading-[29px]">
          <div className="flex min-h-0 flex-col border border-[#828790] bg-white p-px">
            <div className="flex min-h-0 flex-1">
              <ul className="min-w-0 flex-1 overflow-hidden pl-[2px] whitespace-nowrap">
                {AVAILABLE.map((v) => <li key={v}>{v}</li>)}
              </ul>
              <VBar thumb="h-[59px]" />
            </div>
            <div className="flex h-9 shrink-0 bg-[#f0f0f0] pr-10">
              <Arrow dir="left" />
              <div className="flex-1 pl-[2px]"><div className="h-9 w-[85px] bg-[#cdcdcd]" /></div>
              <Arrow dir="right" />
            </div>
          </div>
          <ul className="overflow-hidden border border-[#828790] bg-white py-px pl-[3px] whitespace-nowrap">
            {CHOSEN.map((v) => <li key={v}>{v}</li>)}
          </ul>
        </div>
      </div>
    </section>
  );
}

/* ---------------------------------------------------------------- tabs -- */

function Documents() {
  return (
    <main className="mx-[9px] mt-[3px] mb-[43px] flex min-w-0 flex-1 flex-col">
      <div className="flex h-[42px] shrink-0 items-end border border-b-0 border-[#c4c4c4] bg-[#f0f0f0] pl-1">
        <div className="relative flex h-10 w-[400px] items-center pl-8">
          <svg className="absolute inset-0 h-full w-full" viewBox="0 0 402 40" preserveAspectRatio="none" aria-hidden="true">
            <defs><linearGradient id="tb" x1="0" y1="0" x2="0" y2="1"><stop offset="0" stopColor="#dbe5fa" /><stop offset="1" stopColor="#86a2e0" /></linearGradient></defs>
            <path d="M1 40L18 5Q20 1 25 1H390Q397 1 399 10L402 40Z" fill="url(#tb)" stroke="#1f4a9c" strokeWidth="1.500" />
          </svg>
          <button type="button" className="relative flex items-center gap-[2px]">
            <span className="bg-white"><Logo /></span>
            <span className="pt-[2px]">TestDataFile5.nex [Data]</span>
          </button>
          <button type="button" aria-label="Close Data" className="relative ml-3"><Cross size={20} width={3} /></button>
        </div>
        <div className="relative -ml-5 flex h-10 w-[450px] items-center pl-[26px]">
          <svg className="absolute inset-0 h-full w-full" viewBox="0 0 450 40" preserveAspectRatio="none" aria-hidden="true">
            <defs><linearGradient id="ty" x1="0" y1="0" x2="0" y2="1"><stop offset="0" stopColor="#fff3d6" /><stop offset="1" stopColor="#ffd976" /></linearGradient></defs>
            <path d="M0 41L14 6Q16 1 21 1H424Q430 1 432 6L449 41" fill="url(#ty)" stroke="#3b5f9e" strokeWidth="1.500" />
          </svg>
          <button type="button" className="relative flex items-center gap-1">
            <Bars />
            <span className="pt-[2px]">TestDataFile5.nex [Graphs1]</span>
          </button>
          <button type="button" aria-label="Close Graphs1" className="relative ml-[13px]"><Cross size={20} width={3} /></button>
        </div>
        <div className="flex h-10 flex-1 items-center justify-end gap-[14px] pr-[6px]">
          <button type="button" aria-label="Previous tab"><svg width="12" height="18" viewBox="0 0 12 18"><path d="M11 1V17L2 9Z" fill="none" stroke="#000" strokeWidth="2" /></svg></button>
          <button type="button" aria-label="Next tab" className="ml-2"><svg width="12" height="18" viewBox="0 0 12 18"><path d="M1 1V17L10 9Z" fill="none" stroke="#000" strokeWidth="2" /></svg></button>
          <button type="button" aria-label="Tab list"><Triangle /></button>
          <button type="button" aria-label="Close tab"><Cross size={22} width={3} /></button>
        </div>
      </div>
      <div className="flex min-h-0 flex-1 border border-[#3b5f9e] bg-[#ffd976] p-[6px]">
        <div className="flex min-w-0 flex-1 border-2 border-[#6b6b6b] border-r-[#e3e3e3] border-b-[#e3e3e3] bg-white pl-[5px]">
          <GraphPage />
          <div className="w-2" />
          <VBar thumb="mt-[202px] h-[636px]" />
        </div>
      </div>
    </main>
  );
}

const MENU: [string, string][] = [
  ["File", "w-[83px]"], ["Edit", "w-[88px]"], ["View", "w-[101px]"], ["Analysis", "w-[136px]"], ["Results", "w-[124px]"],
  ["SavedResults", "w-[196px]"], ["Graphics", "w-[145px]"], ["Script", "w-[109px]"], ["Template", "w-[154px]"], ["3DView", "w-[134px]"],
  ["Matlab", "w-[125px]"], ["R-project", "w-[152px]"], ["Markers", "w-[136px]"], ["Online", "w-[120px]"], ["Sound", "w-[118px]"],
  ["Window", "w-[142px]"], ["Help", "w-[96px]"],
];

const SIDE = "flex flex-col items-center border border-r-0 border-[#a0a0a0] bg-linear-to-r from-[#f0f0f0] to-[#fafafa] text-[#6d6d6d]";

export default function App() {
  return (
    <div className="flex h-screen flex-col overflow-hidden border-2 border-[#6b6b6b] bg-[#f0f0f0] font-['Open_Sans','Noto_Sans',sans-serif] text-[25px] leading-[34px] text-black">
      <header className="flex h-[63px] shrink-0 items-center bg-white pl-[15px]">
        <Logo />
        <div className="flex-1 pl-1">NeuroExplorer - [TestDataFile5.nex [Graphs1]]</div>
        <button type="button" aria-label="Minimize" className="flex w-[105px] justify-center"><svg width="20" height="20" viewBox="0 0 20 20"><path d="M0 10H20" stroke="#000" strokeWidth="2" /></svg></button>
        <button type="button" aria-label="Maximize" className="flex w-[105px] justify-center"><svg width="20" height="20" viewBox="0 0 20 20"><path d="M1 1H19V19H1Z" fill="none" stroke="#000" strokeWidth="2" /></svg></button>
        <button type="button" aria-label="Close window" className="flex w-[106px] justify-center"><svg width="20" height="20" viewBox="0 0 20 20"><path d="M1 1L19 19M19 1L1 19" stroke="#000" strokeWidth="2" /></svg></button>
      </header>

      <nav className="flex h-[61px] shrink-0 items-center border-b border-[#b8b8b8] bg-linear-to-b from-[#efefef] to-white">
        <Grip />
        <div className="flex flex-1 pl-[7px]">
          {MENU.map(([m, w]) => (
            <button key={m} type="button" className={`shrink-0 pt-1 pl-5 text-left whitespace-nowrap ${w}`}>{m}</button>
          ))}
        </div>
        <div className="flex items-center gap-[19px] pr-[15px]">
          <button type="button" aria-label="Minimize document"><svg width="13" height="20" viewBox="0 0 13 20"><path d="M0 17H13" stroke="#000" strokeWidth="3" /></svg></button>
          <button type="button" aria-label="Restore document" className="ml-[2px]"><svg width="21" height="18" viewBox="0 0 21 18"><path d="M6 6V1H20V10H15M1 7H14V16H1ZM1 8H14M6 2H20" fill="none" stroke="#000" strokeWidth="2" /></svg></button>
          <button type="button" aria-label="Close document"><Cross size={16} width={3} /></button>
        </div>
      </nav>

      <div className="flex h-[63px] shrink-0">
        <div className="flex items-center border-b border-[#b8b8b8] bg-linear-to-b from-[#f1f1f1] to-white">
          <Grip />
          <div className="w-1" />
          {TOOL_GROUPS.map((g) => (
            <React.Fragment key={g[0]}>
              {g.map((t) => (
                <button key={t} type="button" title={t} className={`flex size-[46px] shrink-0 items-center justify-center ${t === "Graphs" ? "border border-[#0078d7] bg-[#dcebf7]" : ""}`}>
                  <Ic>{ICONS[t]}</Ic>
                </button>
              ))}
              <Sep />
            </React.Fragment>
          ))}
          <label htmlFor="find" className="ml-[7px] w-[57px] pt-[2px] text-[#a5a5a5]">Find</label>
          <div className="relative flex h-[53px] w-[261px] items-center">
            <select id="find" disabled className="h-full w-full appearance-none border border-[#adadad] bg-[#f0f0f0] opacity-100" />
            <span className="pointer-events-none absolute right-[9px]"><Triangle fill="#a0a0a0" /></span>
          </div>
          <Sep />
          <button type="button" className="ml-[8px] w-[176px] pt-[2px] text-left">RecordMacro</button>
          <button type="button" disabled className="w-[66px] pt-[2px] text-left text-[#a5a5a5]">Stop</button>
          <button type="button" aria-label="Toolbar options" className="mt-6 mr-2"><Triangle /></button>
        </div>
      </div>

      <div className="flex min-h-0 flex-1 bg-linear-to-r from-[#f0f0f0] to-[#fafafa]">
        <aside className="flex w-[540px] shrink-0 flex-col pt-[2px] pl-[2px]">
          <FilesPanel />
          <PropertiesPanel />
          <div className="flex h-[46px] shrink-0 items-start pt-1 pl-[2px]">
            <button type="button" className="flex h-[41px] items-center gap-[2px] border border-b-0 border-[#a0a0a0] bg-[#f7f7f7] pr-3 pl-3 text-[#6d6d6d]">
              <Ic><path d="M1 8H8M20 8H36M1 8V28H20M31 28H36" fill="none" stroke="#5f84a8" strokeWidth="2" /><path d="M9 3H19V10L14 15L9 10Z" fill="#dce8f4" stroke="#4d7196" strokeWidth="2" /><path d="M20 32V24L25 20L31 24V32Z" fill="#dce8f4" stroke="#4d7196" strokeWidth="2" /><path d="M7 18h2M19 18h2M30 18h2" stroke="#555" strokeWidth="2" /></Ic>
              <span className="pt-[2px]">Explore</span>
            </button>
          </div>
        </aside>

        <Documents />

        <aside className="mt-[2px] mb-[43px] flex w-[494px] shrink-0 flex-col">
          <AnalysesPanel />
          <VariablesPanel />
        </aside>

        <div className="ml-1 flex w-10 shrink-0 flex-col gap-[23px] pt-1">
          <button type="button" className={`h-[190px] gap-[6px] pt-3 ${SIDE}`}>
            <Ic><path d="M3 1h22v32H3z" fill="#dbe7f6" stroke="#6a84a8" strokeWidth="2" /><path d="M7 8h12M7 13h12M7 18h8" stroke="#7d97bb" strokeWidth="2" /><path d="M10 22h7v11h-7z" fill="#8ac926" /><path d="M17 14h9v19h-9z" fill="#e2402e" /><path d="M26 19h9v14h-9z" fill="#2e95d3" /></Ic>
            <span className="[writing-mode:vertical-rl]">Templates</span>
          </button>
          <button type="button" className={`h-[150px] gap-[6px] pt-3 ${SIDE}`}>
            <Ic><path d="M6 3H33V8H29V30Q29 34 25 34H3V29H6Z" fill="#e6f0f0" stroke="#8aa5a8" strokeWidth="2" /><path d="M11 11h12M11 16h12M11 21h12M11 26h8" stroke="#a9bfc1" strokeWidth="2" /></Ic>
            <span className="[writing-mode:vertical-rl]">Scripts</span>
          </button>
        </div>
      </div>

      <footer className="flex h-[45px] shrink-0 items-center bg-[#f0f0f0] pl-[7px]">
        <div className="flex-1 pt-2">For Help, press F1</div>
        <div className="flex h-10 items-center gap-[5px] self-end">
          <div className="h-full w-4 border border-[#a8a8a8]" />
          <div className="h-full w-[38px] border border-[#a8a8a8] pt-1 pl-[6px]">X:</div>
          <div className="h-full w-[37px] border border-[#a8a8a8] pt-1 pl-[6px]">Y:</div>
          <div className="h-full w-[205px] border border-[#a8a8a8] pt-1 pl-[6px] whitespace-nowrap">Template: None</div>
        </div>
        <svg width="22" height="22" viewBox="0 0 22 22" className="ml-[18px] self-end" aria-hidden="true"><path d="M1 22L22 1M9 22L22 9M17 22L22 17" stroke="#9a9a9a" strokeWidth="1.500" /></svg>
      </footer>
    </div>
  );
}
